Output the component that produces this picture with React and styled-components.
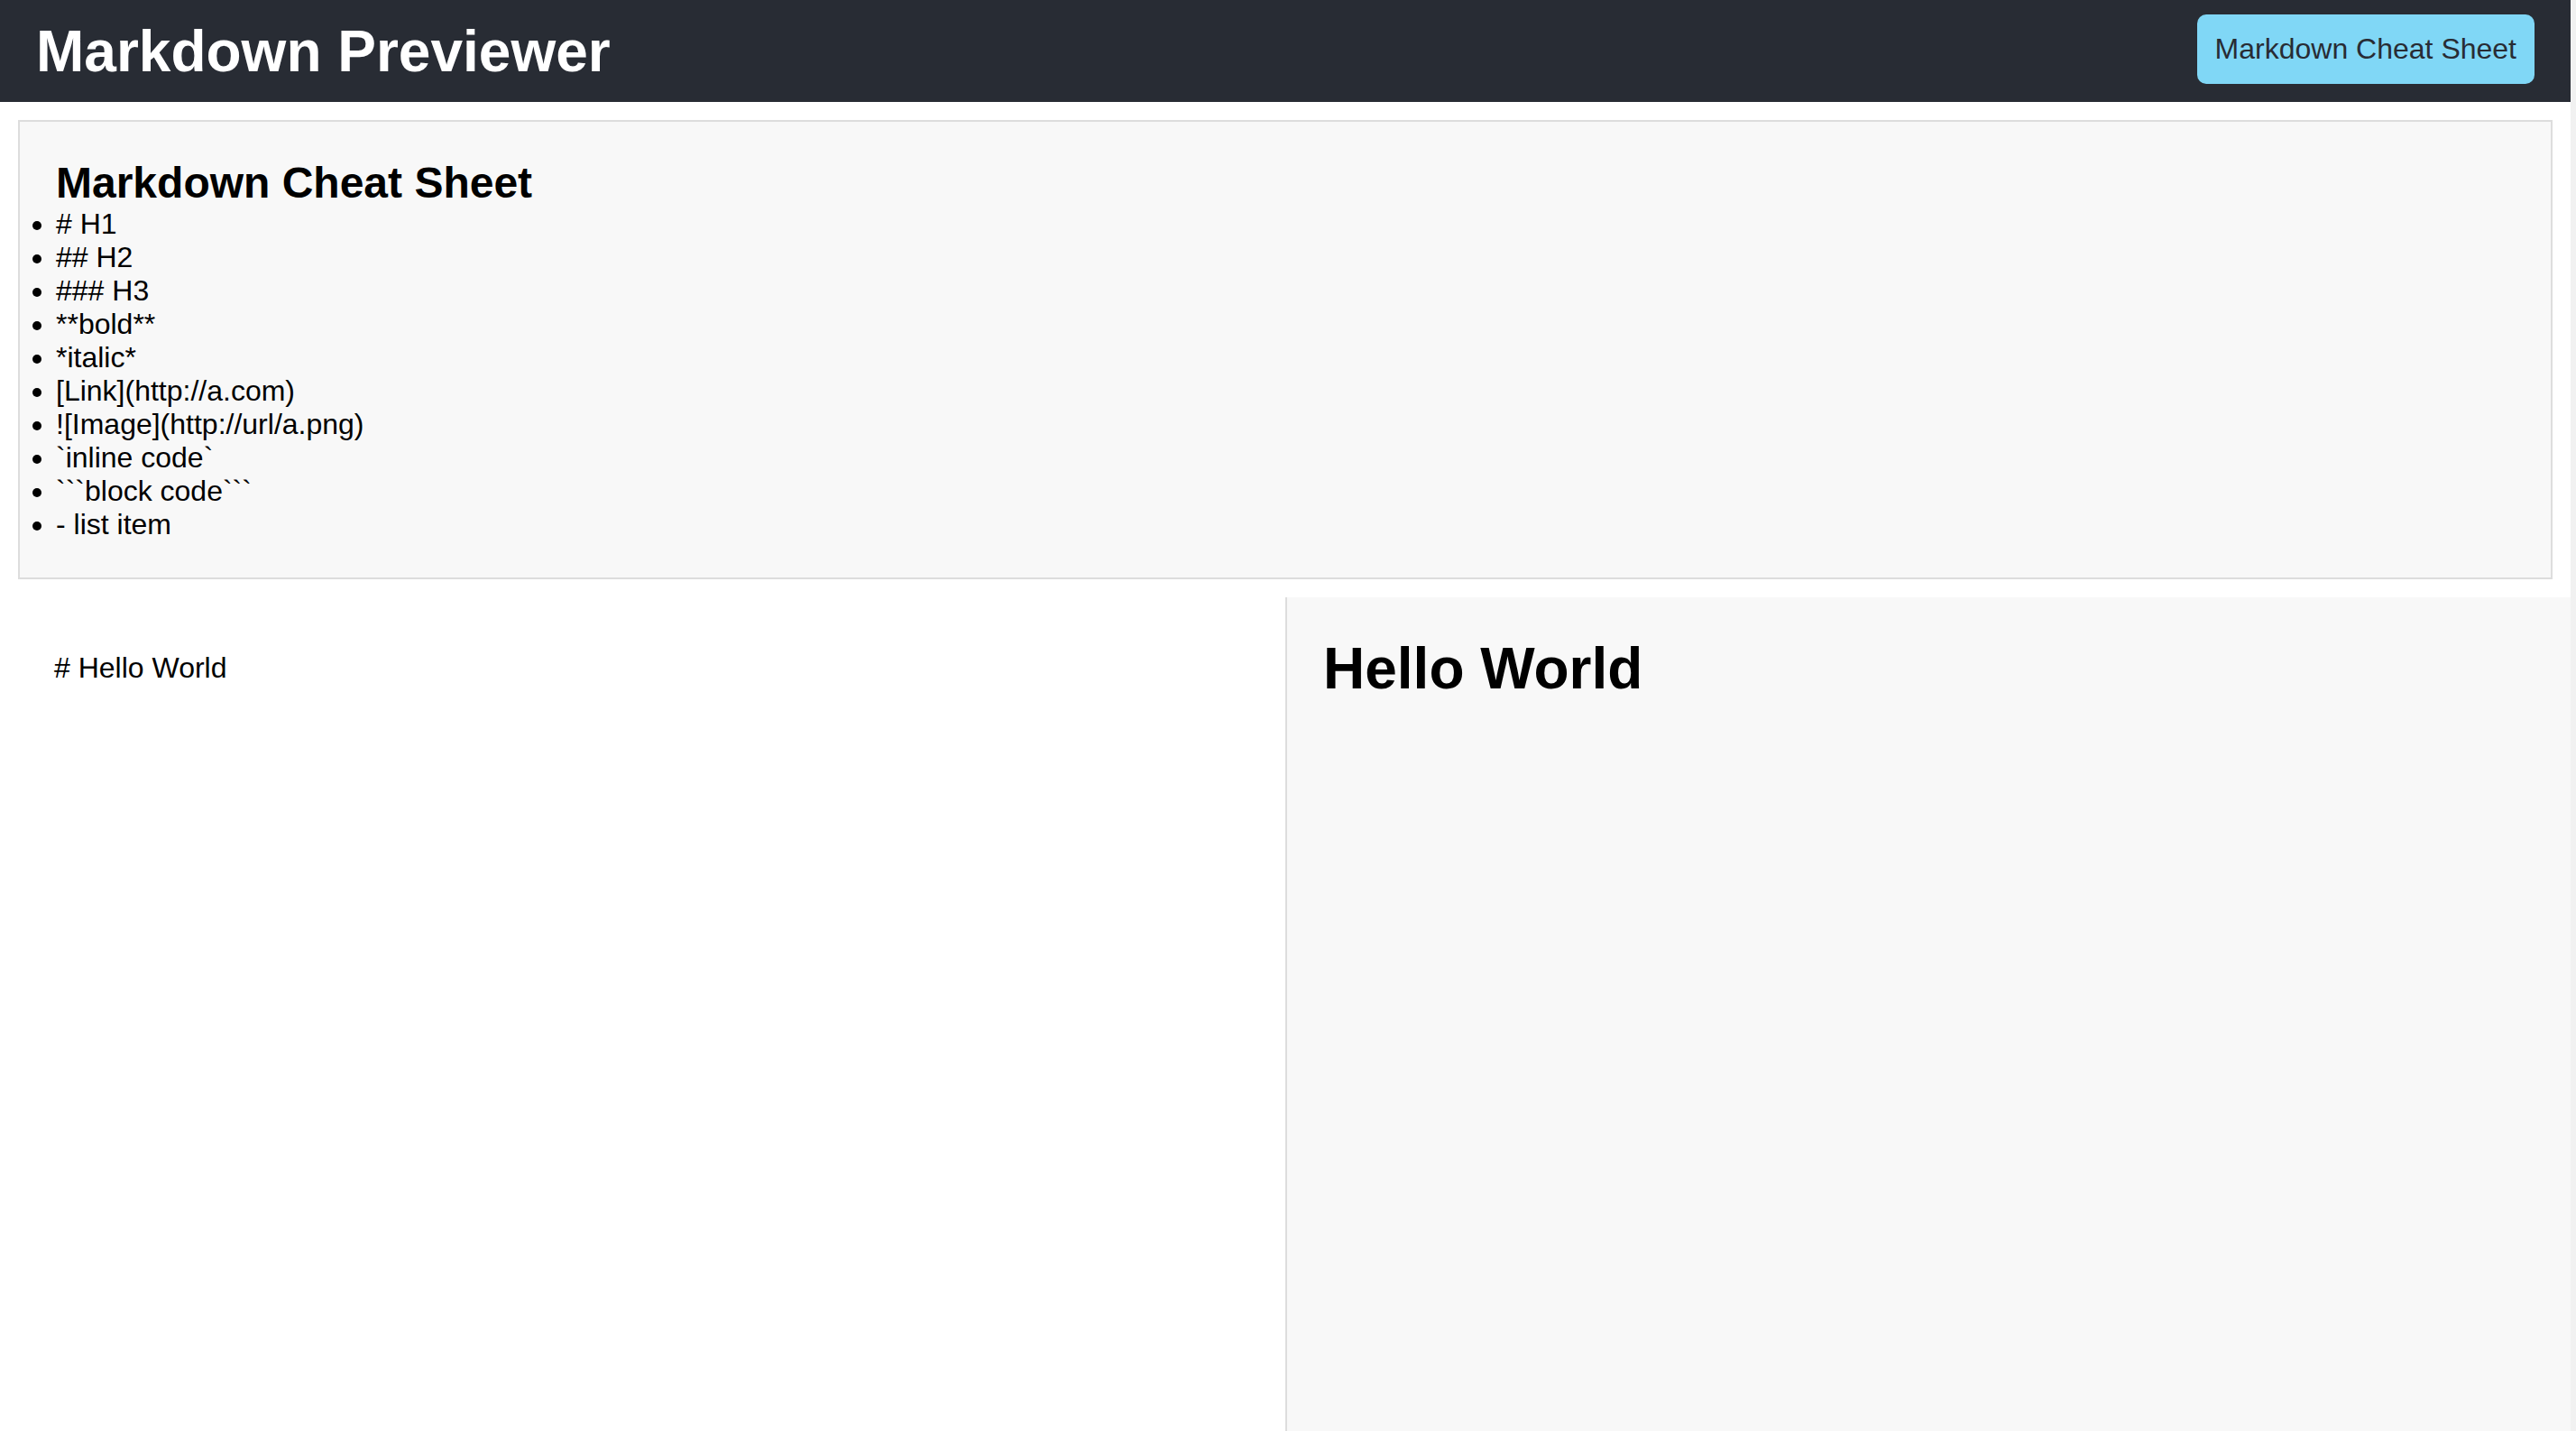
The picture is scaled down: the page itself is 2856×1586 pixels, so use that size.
import React, { useState } from 'react';
import styled, { createGlobalStyle } from 'styled-components';

const GlobalStyle = createGlobalStyle`
  html, body {
    margin: 0;
    padding: 0;
    background: #ffffff;
  }
  body {
    font-family: "Liberation Sans", Arial, Helvetica, sans-serif;
    color: #000;
  }
  * {
    box-sizing: border-box;
  }
`;

const Page = styled.div`
  display: flex;
  flex-direction: column;
  height: 1586px;
  border-right: 6px solid #f1f1f1;
  overflow: hidden;
`;

const Header = styled.header`
  display: flex;
  align-items: center;
  justify-content: space-between;
  height: 113px;
  padding: 0 40px;
  background: #282c34;
  flex-shrink: 0;
`;

const Title = styled.h1`
  margin: 0;
  font-size: 64px;
  font-weight: bold;
  color: #ffffff;
`;

const CheatButton = styled.button`
  margin-bottom: 4px;
  border: none;
  border-radius: 10px;
  padding: 20px;
  background: #80d7f6;
  color: #282c34;
  font-family: "Liberation Sans", Arial, sans-serif;
  font-size: 32px;
  cursor: pointer;
`;

const CheatSheet = styled.section`
  margin: 20px;
  padding: 40px;
  background: #f8f8f8;
  border: 2px solid #dddddd;
  flex-shrink: 0;
`;

const CheatTitle = styled.h2`
  margin: 0;
  font-size: 48px;
  font-weight: bold;
  line-height: 1.15;
`;

const CheatList = styled.ul`
  margin: 0;
  padding: 0;
  font-size: 32px;
  list-style: disc outside;
`;

const Split = styled.div`
  display: grid;
  grid-template-columns: 1fr 1fr;
  flex: 1;
  min-height: 0;
`;

const EditorPane = styled.div`
  padding: 20px;
  background: #ffffff;
`;

const Editor = styled.textarea`
  display: block;
  width: 100%;
  height: 100%;
  padding: 40px;
  border: none;
  outline: none;
  resize: none;
  background: transparent;
  font-family: "Liberation Sans", Arial, sans-serif;
  font-size: 32px;
  color: #000;
`;

const PreviewPane = styled.div`
  padding: 42px 40px 40px;
  background: #f8f8f8;
  border-left: 2px solid #dddddd;
`;

const PreviewHeading = styled.h1`
  margin: 0;
  font-size: 64px;
  font-weight: bold;
`;

const cheats = [
  '# H1',
  '## H2',
  '### H3',
  '**bold**',
  '*italic*',
  '[Link](http://a.com)',
  '![Image](http://url/a.png)',
  '`inline code`',
  '```block code```',
  '- list item',
];

const App = () => {
  const [text, setText] = useState('# Hello World');
  const [showCheats, setShowCheats] = useState(true);

  const heading = text.startsWith('# ') ? text.slice(2) : text;

  return (
    <Page>
      <GlobalStyle />
      <Header>
        <Title>Markdown Previewer</Title>
        <CheatButton onClick={() => setShowCheats(!showCheats)}>Markdown Cheat Sheet</CheatButton>
      </Header>
      {showCheats && (
        <CheatSheet>
          <CheatTitle>Markdown Cheat Sheet</CheatTitle>
          <CheatList>
            {cheats.map((c) => (
              <li key={c}>{c}</li>
            ))}
          </CheatList>
        </CheatSheet>
      )}
      <Split>
        <EditorPane>
          <Editor value={text} onChange={(e) => setText(e.target.value)} />
        </EditorPane>
        <PreviewPane>
          <PreviewHeading>{heading}</PreviewHeading>
        </PreviewPane>
      </Split>
    </Page>
  );
};

export default App;
